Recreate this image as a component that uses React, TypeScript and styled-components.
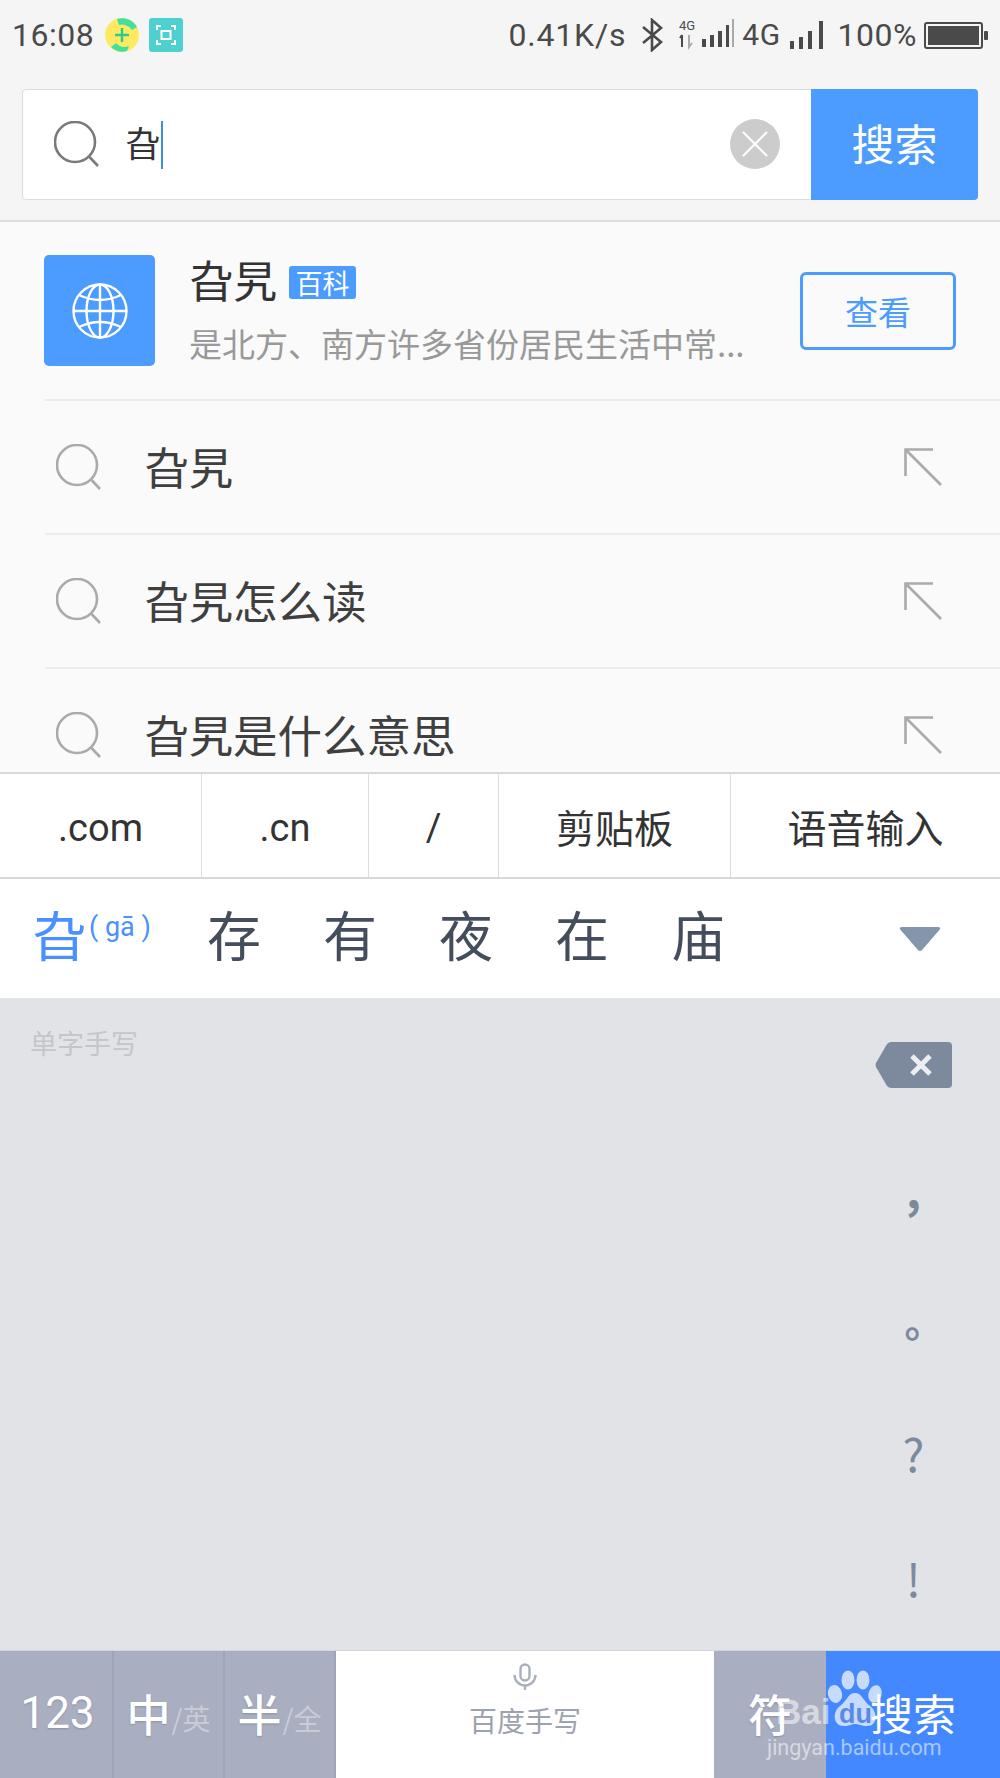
import React from 'react';
import styled, { createGlobalStyle } from 'styled-components';

const CJK = '"Noto Sans CJK SC", "Noto Sans", sans-serif';
const LATIN = 'Roboto, "Noto Sans CJK SC", sans-serif';
const BLUE = '#4c9bff';

const Global = createGlobalStyle`
  html, body { margin: 0; padding: 0; background: #f5f5f5; }
  * { box-sizing: border-box; }
  body { font-family: ${CJK}; }
`;

const Page = styled.div`
  width: 1000px;
  height: 1778px;
  position: relative;
  display: flex;
  flex-direction: column;
  overflow: hidden;
`;

/* status bar */
const StatusBar = styled.div`
  height: 70px;
  padding: 0 10px 0 12px;
  display: flex;
  align-items: center;
  justify-content: space-between;
  color: #4a4a4a;
  font-family: ${LATIN};
`;

const StatusGroup = styled.div`
  display: flex;
  align-items: center;
`;

const StatusText = styled.span<{ $ml?: number; $size?: number; $spacing?: number }>`
  font-size: ${p => p.$size ?? 32}px;
  line-height: 36px;
  margin-left: ${p => p.$ml ?? 0}px;
  letter-spacing: ${p => p.$spacing ?? 0.5}px;
`;

const StatusIcon = styled.svg<{ $ml?: number }>`
  display: block;
  flex: none;
  margin-left: ${p => p.$ml ?? 0}px;
`;

/* search */
const SearchArea = styled.div`
  height: 152px;
  padding: 19px 22px 21px;
  border-bottom: 2px solid #dcdcdc;
  background: #f5f5f5;
`;

const SearchBox = styled.div`
  height: 111px;
  display: flex;
  align-items: stretch;
  background: #fff;
  border: 1px solid #dcdcdc;
  border-radius: 4px;
`;

const SearchField = styled.div`
  flex: 1;
  display: flex;
  align-items: center;
  padding-left: 31px;
`;

const Typed = styled.span`
  margin-left: 25px;
  margin-bottom: 5px;
  font-size: 35px;
  line-height: 48px;
  color: #333;
`;

const Caret = styled.span`
  width: 2px;
  height: 48px;
  margin-left: 1px;
  background: #3b8fe0;
`;

const ClearButton = styled.span`
  width: 50px;
  height: 50px;
  margin-left: auto;
  margin-right: 32px;
  margin-bottom: 2px;
  border-radius: 50%;
  background: #cccccc;
  display: flex;
  align-items: center;
  justify-content: center;
`;

const SearchButton = styled.div`
  width: 167px;
  margin: -1px;
  padding-bottom: 5px;
  background: ${BLUE};
  color: #fff;
  font-size: 43px;
  display: flex;
  align-items: center;
  justify-content: center;
  border-radius: 0 4px 4px 0;
`;

/* suggestion list */
const List = styled.div`
  height: 550px;
  background: #fafafa;
  padding-left: 45px;
  overflow: hidden;
`;

const Card = styled.div`
  height: 179px;
  padding-top: 33px;
  border-bottom: 2px solid #ececec;
  display: flex;
  align-items: flex-start;
`;

const CardIcon = styled.div`
  width: 111px;
  height: 111px;
  margin-left: -1px;
  border-radius: 5px;
  background: ${BLUE};
  display: flex;
  align-items: center;
  justify-content: center;
  flex: none;
`;

const CardBody = styled.div`
  margin-left: 34px;
  width: 611px;
`;

const CardTitle = styled.div`
  display: flex;
  align-items: center;
  height: 54px;
  margin-top: -3px;
  font-size: 44px;
  color: #333;
`;

const Badge = styled.span`
  margin-left: 12px;
  margin-top: 6px;
  width: 67px;
  height: 33px;
  border-radius: 3px;
  background: ${BLUE};
  color: #fff;
  font-size: 27px;
  line-height: 33px;
  text-align: center;
`;

const CardDesc = styled.div`
  margin-top: 15px;
  font-size: 33px;
  line-height: 44px;
  color: #999;
  white-space: nowrap;
`;

const ViewButton = styled.div`
  width: 156px;
  height: 78px;
  margin-top: 17px;
  border: 3px solid ${BLUE};
  border-radius: 6px;
  color: ${BLUE};
  font-size: 33px;
  display: flex;
  align-items: center;
  justify-content: center;
  flex: none;
`;

const Row = styled.div`
  height: 134px;
  flex: none;
  display: flex;
  align-items: center;
  border-bottom: 2px solid #ececec;
  padding-left: 11px;
`;

const RowText = styled.span`
  margin-left: 42px;
  margin-bottom: 4px;
  font-size: 44.5px;
  color: #3f3f3f;
`;

const RowArrow = styled.svg`
  margin-left: auto;
  margin-right: 58px;
  display: block;
`;

/* keyboard toolbar */
const Toolbar = styled.div`
  height: 107px;
  display: flex;
  background: #fff;
  border-top: 2px solid #d8d8d8;
  border-bottom: 2px solid #d8d8d8;
`;

const ToolCell = styled.div<{ $w: number; $latin?: boolean }>`
  width: ${p => p.$w}px;
  flex: none;
  padding-top: ${p => (p.$latin ? 4 : 0)}px;
  border-right: 1px solid #dedede;
  display: flex;
  align-items: center;
  justify-content: center;
  font-family: ${p => (p.$latin ? LATIN : CJK)};
  font-size: ${p => (p.$latin ? 38 : 39)}px;
  color: #333;
  &:last-child { border-right: none; }
`;

/* candidates */
const Candidates = styled.div`
  height: 119px;
  background: #fff;
  display: flex;
  align-items: center;
  padding-left: 32px;
`;

const FirstCandidate = styled.div`
  width: 175px;
  margin-bottom: 9px;
  display: flex;
  align-items: flex-start;
  color: #4a90ff;
  font-size: 54px;
  line-height: 70px;
`;

const Pinyin = styled.span`
  font-family: ${LATIN};
  font-size: 27px;
  line-height: 36px;
  margin-left: 3px;
  margin-top: 10px;
`;

const Candidate = styled.span`
  width: 116px;
  margin-bottom: 9px;
  font-size: 54px;
  line-height: 70px;
  color: #434d5b;
`;

const MoreTriangle = styled.svg`
  margin-left: 112px;
  display: block;
`;

/* handwriting area */
const Panel = styled.div`
  flex: 1;
  background: #e1e3e7;
  display: flex;
  justify-content: space-between;
  padding: 27px 48px 0 30px;
`;

const PanelHint = styled.div`
  font-size: 27px;
  line-height: 36px;
  color: #c3c6cc;
`;

const PunctColumn = styled.div`
  width: 77px;
  display: flex;
  flex-direction: column;
  align-items: center;
  padding-top: 17px;
`;

const BackspaceIcon = styled.svg`
  display: block;
  flex: none;
  margin-bottom: 59px;
`;

const Punct = styled.div<{ $size?: number; $bold?: boolean; $dx?: number; $dy?: number }>`
  height: 125px;
  width: 77px;
  flex: none;
  display: flex;
  align-items: center;
  justify-content: center;
  color: #7d8a9e;
  font-size: ${p => p.$size ?? 46}px;
  font-weight: ${p => (p.$bold ? 700 : 400)};
  line-height: 1;
  transform: translate(${p => p.$dx ?? 0}px, ${p => p.$dy ?? 0}px);
`;

/* bottom key row */
const KeyRow = styled.div`
  height: 128px;
  display: flex;
  border-top: 1px solid #d3d6dc;
`;

const GrayKey = styled.div<{ $w?: number }>`
  width: ${p => p.$w ?? 112}px;
  flex: none;
  padding-bottom: 4px;
  background: #a9afc1;
  border-right: 2px solid #9ea5b8;
  color: #fff;
  display: flex;
  align-items: center;
  justify-content: center;
  font-size: 44px;
  font-weight: 500;
  text-shadow: 0 1px 2px rgba(90, 100, 120, 0.4);
`;

const KeyDigits = styled.span`
  font-family: ${LATIN};
  font-size: 44px;
  font-weight: 400;
  margin-left: 3px;
`;

const KeyAlt = styled.span`
  font-size: 28px;
  font-weight: 400;
  color: #c8ccd6;
  margin-left: 1px;
  margin-top: 10px;
  text-shadow: none;
`;

const SpaceKey = styled.div`
  width: 378px;
  flex: none;
  background: #fff;
  display: flex;
  flex-direction: column;
  align-items: center;
  padding-top: 12px;
  color: #9ca3ae;
  font-size: 28px;
`;

const SpaceLabel = styled.span`
  line-height: 38px;
  margin-top: 10px;
`;

const SymbolKey = styled(GrayKey)`
  border-right: none;
`;

const GoKey = styled.div`
  flex: 1;
  background: #4488ff;
  color: #fff;
  font-size: 43px;
  display: flex;
  align-items: center;
  justify-content: center;
  padding-bottom: 6px;
`;

/* watermark sits over the bottom keys */
const Watermark = styled.div`
  position: absolute;
  left: 766px;
  top: 1668px;
  width: 190px;
  height: 96px;
  color: rgba(255, 255, 255, 0.55);
  pointer-events: none;
`;

const WatermarkBai = styled.span`
  position: absolute;
  left: 10px;
  top: 22px;
  font-family: "Liberation Sans", sans-serif;
  font-weight: 700;
  font-size: 35px;
  line-height: 44px;
`;

const WatermarkPaw = styled.svg`
  position: absolute;
  left: 60px;
  top: 2px;
`;

const WatermarkDu = styled.span`
  position: absolute;
  left: 73px;
  top: 30px;
  font-family: "Liberation Sans", sans-serif;
  font-weight: 700;
  font-size: 27px;
  line-height: 32px;
  color: #5a8ae6;
`;

const WatermarkUrl = styled.span`
  position: absolute;
  left: 1px;
  top: 65px;
  font-family: ${LATIN};
  font-size: 21.5px;
  line-height: 30px;
  white-space: nowrap;
`;

function SearchGlyph({ color }: { color: string }) {
  return (
    <svg width="46" height="47" viewBox="0 0 46 47" fill="none" stroke={color} strokeWidth="2.6" style={{ display: 'block', flex: 'none' }}>
      <circle cx="21" cy="21" r="20" />
      <path d="M35.5 36 L44 45" />
    </svg>
  );
}

function Arrow() {
  return (
    <RowArrow width="38" height="38" viewBox="0 0 38 38" fill="none" stroke="#aaaaaa" strokeWidth="2.6">
      <path d="M1.5 28 V1.5 H29" />
      <path d="M1.5 1.5 L37 37" />
    </RowArrow>
  );
}

const rows = ['旮旯', '旮旯怎么读', '旮旯是什么意思'];
const candidates = ['存', '有', '夜', '在', '庙'];

export default function App() {
  return (
    <Page>
      <Global />
      <StatusBar>
        <StatusGroup>
          <StatusText>16:08</StatusText>
          <StatusIcon $ml={11} width="34" height="34" viewBox="0 0 34 34">
            <circle cx="17" cy="17" r="17" fill="#ffe960" />
            <path d="M12 1 A17 17 0 0 1 32 9 L27 12 A12 12 0 0 0 14 7 Z" fill="#3fe0a0" />
            <path d="M22 33 A17 17 0 0 1 6 29 L11 25 A12 12 0 0 0 24 28 Z" fill="#3fe0a0" />
            <path d="M17 10 V24 M10 17 H24" stroke="#2fc98e" strokeWidth="2.4" />
          </StatusIcon>
          <StatusIcon $ml={10} width="34" height="34" viewBox="0 0 34 34">
            <rect width="34" height="34" rx="3" fill="#4fd0d0" />
            <path d="M8 12 V8 H12 M22 8 H26 V12 M26 22 V26 H22 M12 26 H8 V22" fill="none" stroke="#fff" strokeWidth="2" />
            <rect x="12.5" y="13" width="9" height="8" fill="none" stroke="#fff" strokeWidth="2" />
          </StatusIcon>
        </StatusGroup>
        <StatusGroup>
          <StatusText $spacing={0.8}>0.41K/s</StatusText>
          <StatusIcon $ml={15} width="24" height="34" viewBox="0 0 24 34" fill="none" stroke="#4a4a4a" strokeWidth="2.6">
            <path d="M2 9 L20 24 L11 32 V2 L20 10 L2 25" />
          </StatusIcon>
          <StatusIcon $ml={14} width="56" height="34" viewBox="0 0 56 34">
            <text x="0" y="12" fontSize="13" fontFamily="Roboto, sans-serif" fill="#4a4a4a">4G</text>
            <path d="M3 17 V29 M3 17 L1 20" stroke="#4a4a4a" strokeWidth="2" fill="none" />
            <path d="M10 17 V29 L13 25" stroke="#aaaaaa" strokeWidth="2" fill="none" />
            <path d="M23 21 h4 v8 h-4 Z M31 17 h4 v12 h-4 Z M39 13 h4 v16 h-4 Z M47 7 h3 v22 h-3 Z" fill="#4a4a4a" />
            <path d="M53 1 h2 v28 h-2 Z" fill="#aaaaaa" />
          </StatusIcon>
          <StatusText $ml={7} $size={30}>4G</StatusText>
          <StatusIcon $ml={9} width="36" height="30" viewBox="0 0 36 30">
            <path d="M0 21 h4 v8 h-4 Z M9 17 h4 v12 h-4 Z M18 11 h4 v18 h-4 Z M29 1 h4 v28 h-4 Z" fill="#4a4a4a" />
          </StatusIcon>
          <StatusText $ml={12}>100%</StatusText>
          <StatusIcon $ml={7} width="66" height="27" viewBox="0 0 66 27">
            <rect x="1" y="1" width="57" height="25" rx="2" fill="none" stroke="#4a4a4a" strokeWidth="2" />
            <rect x="4" y="4" width="51" height="19" fill="#4a4a4a" />
            <rect x="60" y="9" width="4" height="9" rx="1" fill="#4a4a4a" />
          </StatusIcon>
        </StatusGroup>
      </StatusBar>

      <SearchArea>
        <SearchBox>
          <SearchField>
            <SearchGlyph color="#7a7a7a" />
            <Typed>旮</Typed>
            <Caret />
            <ClearButton>
              <svg width="26" height="26" viewBox="0 0 26 26" stroke="#fff" strokeWidth="2.2">
                <path d="M1 1 L25 25 M25 1 L1 25" />
              </svg>
            </ClearButton>
          </SearchField>
          <SearchButton>搜索</SearchButton>
        </SearchBox>
      </SearchArea>

      <List>
        <Card>
          <CardIcon>
            <svg width="56" height="56" viewBox="0 0 56 56" fill="none" stroke="#fff" strokeWidth="2.4">
              <circle cx="28" cy="28" r="26.5" />
              <ellipse cx="28" cy="28" rx="13.5" ry="26.5" />
              <path d="M28 1.5 V54.5 M1.5 28 H54.5" />
              <path d="M7 12 Q28 22 49 12 M7 44 Q28 34 49 44" />
            </svg>
          </CardIcon>
          <CardBody>
            <CardTitle>
              旮旯
              <Badge>百科</Badge>
            </CardTitle>
            <CardDesc>是北方、南方许多省份居民生活中常...</CardDesc>
          </CardBody>
          <ViewButton>查看</ViewButton>
        </Card>
        {rows.map(text => (
          <Row key={text}>
            <SearchGlyph color="#aaaaaa" />
            <RowText>{text}</RowText>
            <Arrow />
          </Row>
        ))}
      </List>

      <Toolbar>
        <ToolCell $w={202} $latin>.com</ToolCell>
        <ToolCell $w={167} $latin>.cn</ToolCell>
        <ToolCell $w={130} $latin>/</ToolCell>
        <ToolCell $w={232}>剪贴板</ToolCell>
        <ToolCell $w={269}>语音输入</ToolCell>
      </Toolbar>

      <Candidates>
        <FirstCandidate>
          旮
          <Pinyin>( gā )</Pinyin>
        </FirstCandidate>
        {candidates.map(c => (
          <Candidate key={c}>{c}</Candidate>
        ))}
        <MoreTriangle width="42" height="26" viewBox="0 0 42 26">
          <path d="M3 1 H39 Q42.5 1 40 4.5 L23 24 Q21 26 19 24 L2 4.5 Q-0.5 1 3 1 Z" fill="#8496ac" />
        </MoreTriangle>
      </Candidates>

      <Panel>
        <PanelHint>单字手写</PanelHint>
        <PunctColumn>
          <BackspaceIcon width="77" height="46" viewBox="0 0 77 46">
            <path d="M16 0 H73 Q77 0 77 4 V42 Q77 46 73 46 H16 Q14 46 12 44 L1 25 Q0 23 1 21 L12 2 Q14 0 16 0 Z" fill="#7d8a9e" />
            <path d="M37 14 L55 32 M55 14 L37 32" stroke="#eceef1" strokeWidth="5" />
          </BackspaceIcon>
          <Punct $bold $dy={-22}>,</Punct>
          <Punct $bold $size={40} $dx={11} $dy={-15}>。</Punct>
          <Punct $dy={-8}>?</Punct>
          <Punct $dy={-8}>!</Punct>
        </PunctColumn>
      </Panel>

      <KeyRow>
        <GrayKey $w={114}><KeyDigits>123</KeyDigits></GrayKey>
        <GrayKey $w={111}>中<KeyAlt>/英</KeyAlt></GrayKey>
        <GrayKey $w={111}>半<KeyAlt>/全</KeyAlt></GrayKey>
        <SpaceKey>
          <svg width="24" height="28" viewBox="0 0 24 28" fill="none" stroke="#a9afbb" strokeWidth="2.4">
            <rect x="7.5" y="1.5" width="9" height="16" rx="4.5" />
            <path d="M1.5 12 A10.5 10.5 0 0 0 22.5 12 M12 22.5 V27" />
          </svg>
          <SpaceLabel>百度手写</SpaceLabel>
        </SpaceKey>
        <SymbolKey $w={112}>符</SymbolKey>
        <GoKey>搜索</GoKey>
      </KeyRow>

      <Watermark>
        <WatermarkBai>Bai</WatermarkBai>
        <WatermarkPaw width="56" height="62" viewBox="0 0 56 62">
          <ellipse cx="9" cy="24" rx="7" ry="9" fill="#fff" opacity="0.7" transform="rotate(-15 9 24)" />
          <ellipse cx="22" cy="10" rx="6.5" ry="9.5" fill="#fff" opacity="0.7" />
          <ellipse cx="37" cy="10" rx="6.5" ry="9.5" fill="#fff" opacity="0.7" />
          <ellipse cx="49" cy="24" rx="6.5" ry="9" fill="#fff" opacity="0.7" transform="rotate(15 49 24)" />
          <path d="M29 23 C22 23 21 31 14 36 C6 42 7 56 18 56 C24 56 25 54 29 54 C33 54 35 56 41 56 C52 56 52 42 44 36 C37 31 36 23 29 23 Z" fill="#fff" opacity="0.7" />
        </WatermarkPaw>
        <WatermarkDu>du</WatermarkDu>
        <WatermarkUrl>jingyan.baidu.com</WatermarkUrl>
      </Watermark>
    </Page>
  );
}
